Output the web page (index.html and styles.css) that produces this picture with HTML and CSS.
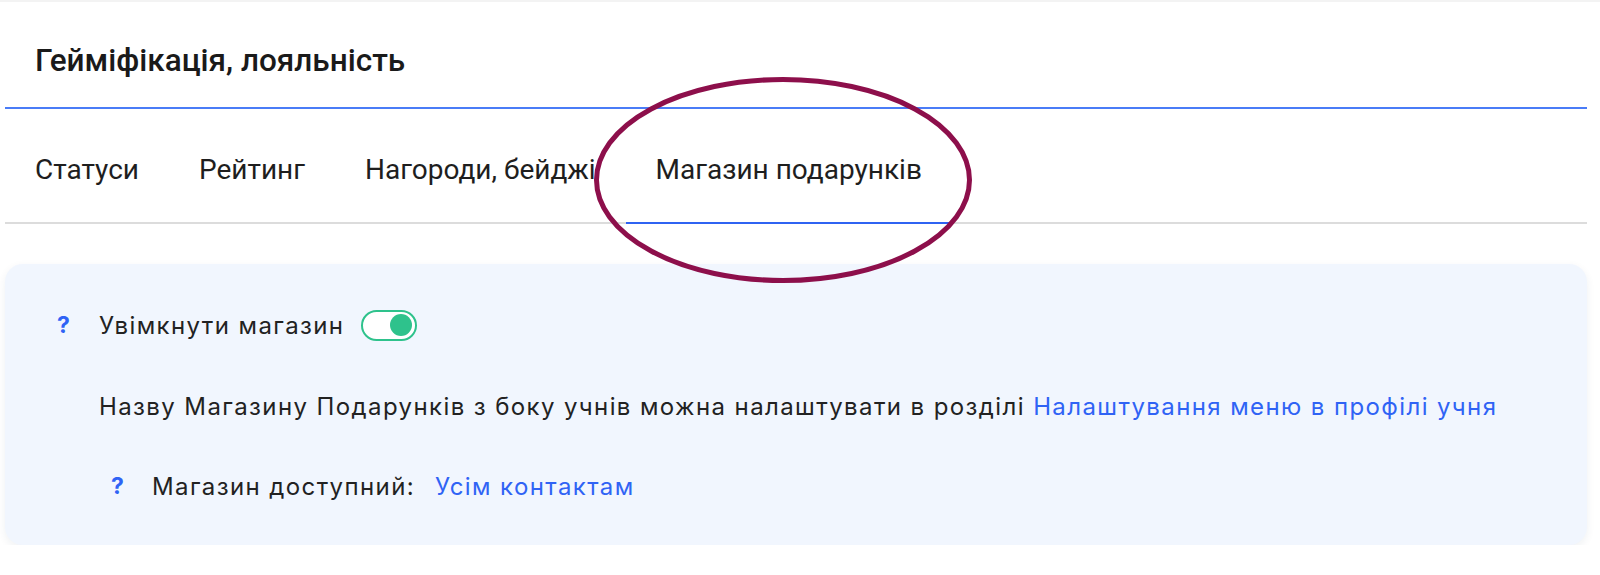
FILE: index.html
```html
<!DOCTYPE html>
<html lang="uk">
<head>
<meta charset="utf-8">
<title>Гейміфікація, лояльність</title>
<link rel="stylesheet" href="styles.css">
</head>
<body>
<div class="page">
  <header class="header">
    <h1 class="title">Гейміфікація, лояльність</h1>
  </header>
  <nav class="tabs">
    <a class="tab">Статуси</a>
    <a class="tab">Рейтинг</a>
    <a class="tab">Нагороди, бейджі</a>
    <a class="tab tab-active">Магазин подарунків</a>
  </nav>
  <section class="card">
    <div class="row">
      <span class="help">?</span>
      <span class="label">Увімкнути магазин</span>
      <span class="toggle"><span class="knob"></span></span>
    </div>
    <div class="row row-note">
      <span>Назву Магазину Подарунків з боку учнів можна налаштувати в розділі <a class="link">Налаштування меню в профілі учня</a></span>
    </div>
    <div class="row row-sub">
      <span class="help help-sub">?</span>
      <span class="label">Магазин доступний:</span>
      <a class="link link-value">Усім контактам</a>
    </div>
  </section>
  <svg class="mark" width="390" height="215" viewBox="0 0 390 215" aria-hidden="true">
    <ellipse cx="193" cy="107" rx="186.5" ry="100.5" fill="none" stroke="#8d0f4b" stroke-width="5"/>
  </svg>
</div>
</body>
</html>
```
FILE: styles.css
```css
html, body {
  margin: 0;
  padding: 0;
  background: #ffffff;
}

body {
  font-family: "Inter", "Roboto", sans-serif;
  color: #222222;
  border-top: 2px solid #f3f3f3;
}

.page {
  position: relative;
  padding: 0 13px 0 5px;
}

.header {
  height: 107px;
  box-sizing: border-box;
  padding: 11px 0 0 30px;
  display: flex;
  align-items: center;
  border-bottom: 2px solid #4a7cf7;
}

.title {
  margin: 0;
  font-family: "Roboto", sans-serif;
  font-weight: 500;
  font-size: 31.5px;
  color: #1a1a1a;
}

.tabs {
  display: flex;
  padding-left: 0;
  border-bottom: 2px solid #dcdcdc;
}

.tab {
  height: 115px;
  box-sizing: border-box;
  padding: 8px 30px 0 30px;
  display: flex;
  align-items: center;
  font-family: "Roboto", sans-serif;
  font-size: 28px;
  color: #1e1e1e;
  margin-bottom: -2px;
  border-bottom: 2px solid transparent;
}

.tab-active {
  border-bottom-color: #2f63f2;
}

.card {
  margin-top: 40px;
  height: 281px;
  box-sizing: border-box;
  padding: 41px 0 0 52px;
  background: #f1f6fe;
  border-radius: 18px;
  box-shadow: 0 3px 8px rgba(30, 50, 90, 0.07);
  display: flex;
  flex-direction: column;
  gap: 41px;
  font-size: 24px;
  letter-spacing: 1.4px;
}

.row {
  display: flex;
  align-items: center;
  height: 40px;
}

.help {
  width: 42px;
  color: #2f63f5;
  font-weight: 700;
  font-size: 23px;
  letter-spacing: 0;
}

.help-sub {
  width: 41px;
}

.row-note {
  padding-left: 42px;
}

.row-sub {
  padding-left: 54px;
  margin-top: -1px;
}

.link {
  color: #2f63f5;
}

.link-value {
  margin-left: 20px;
}

.toggle {
  margin-left: 17px;
  width: 56px;
  height: 31px;
  box-sizing: border-box;
  border: 2px solid #2ec28c;
  border-radius: 16px;
  background: #ffffff;
  display: flex;
  align-items: center;
  justify-content: flex-end;
  padding-right: 3px;
}

.knob {
  width: 22px;
  height: 22px;
  border-radius: 50%;
  background: #2ec28c;
}

.mark {
  position: absolute;
  left: 590px;
  top: 71px;
}
```
